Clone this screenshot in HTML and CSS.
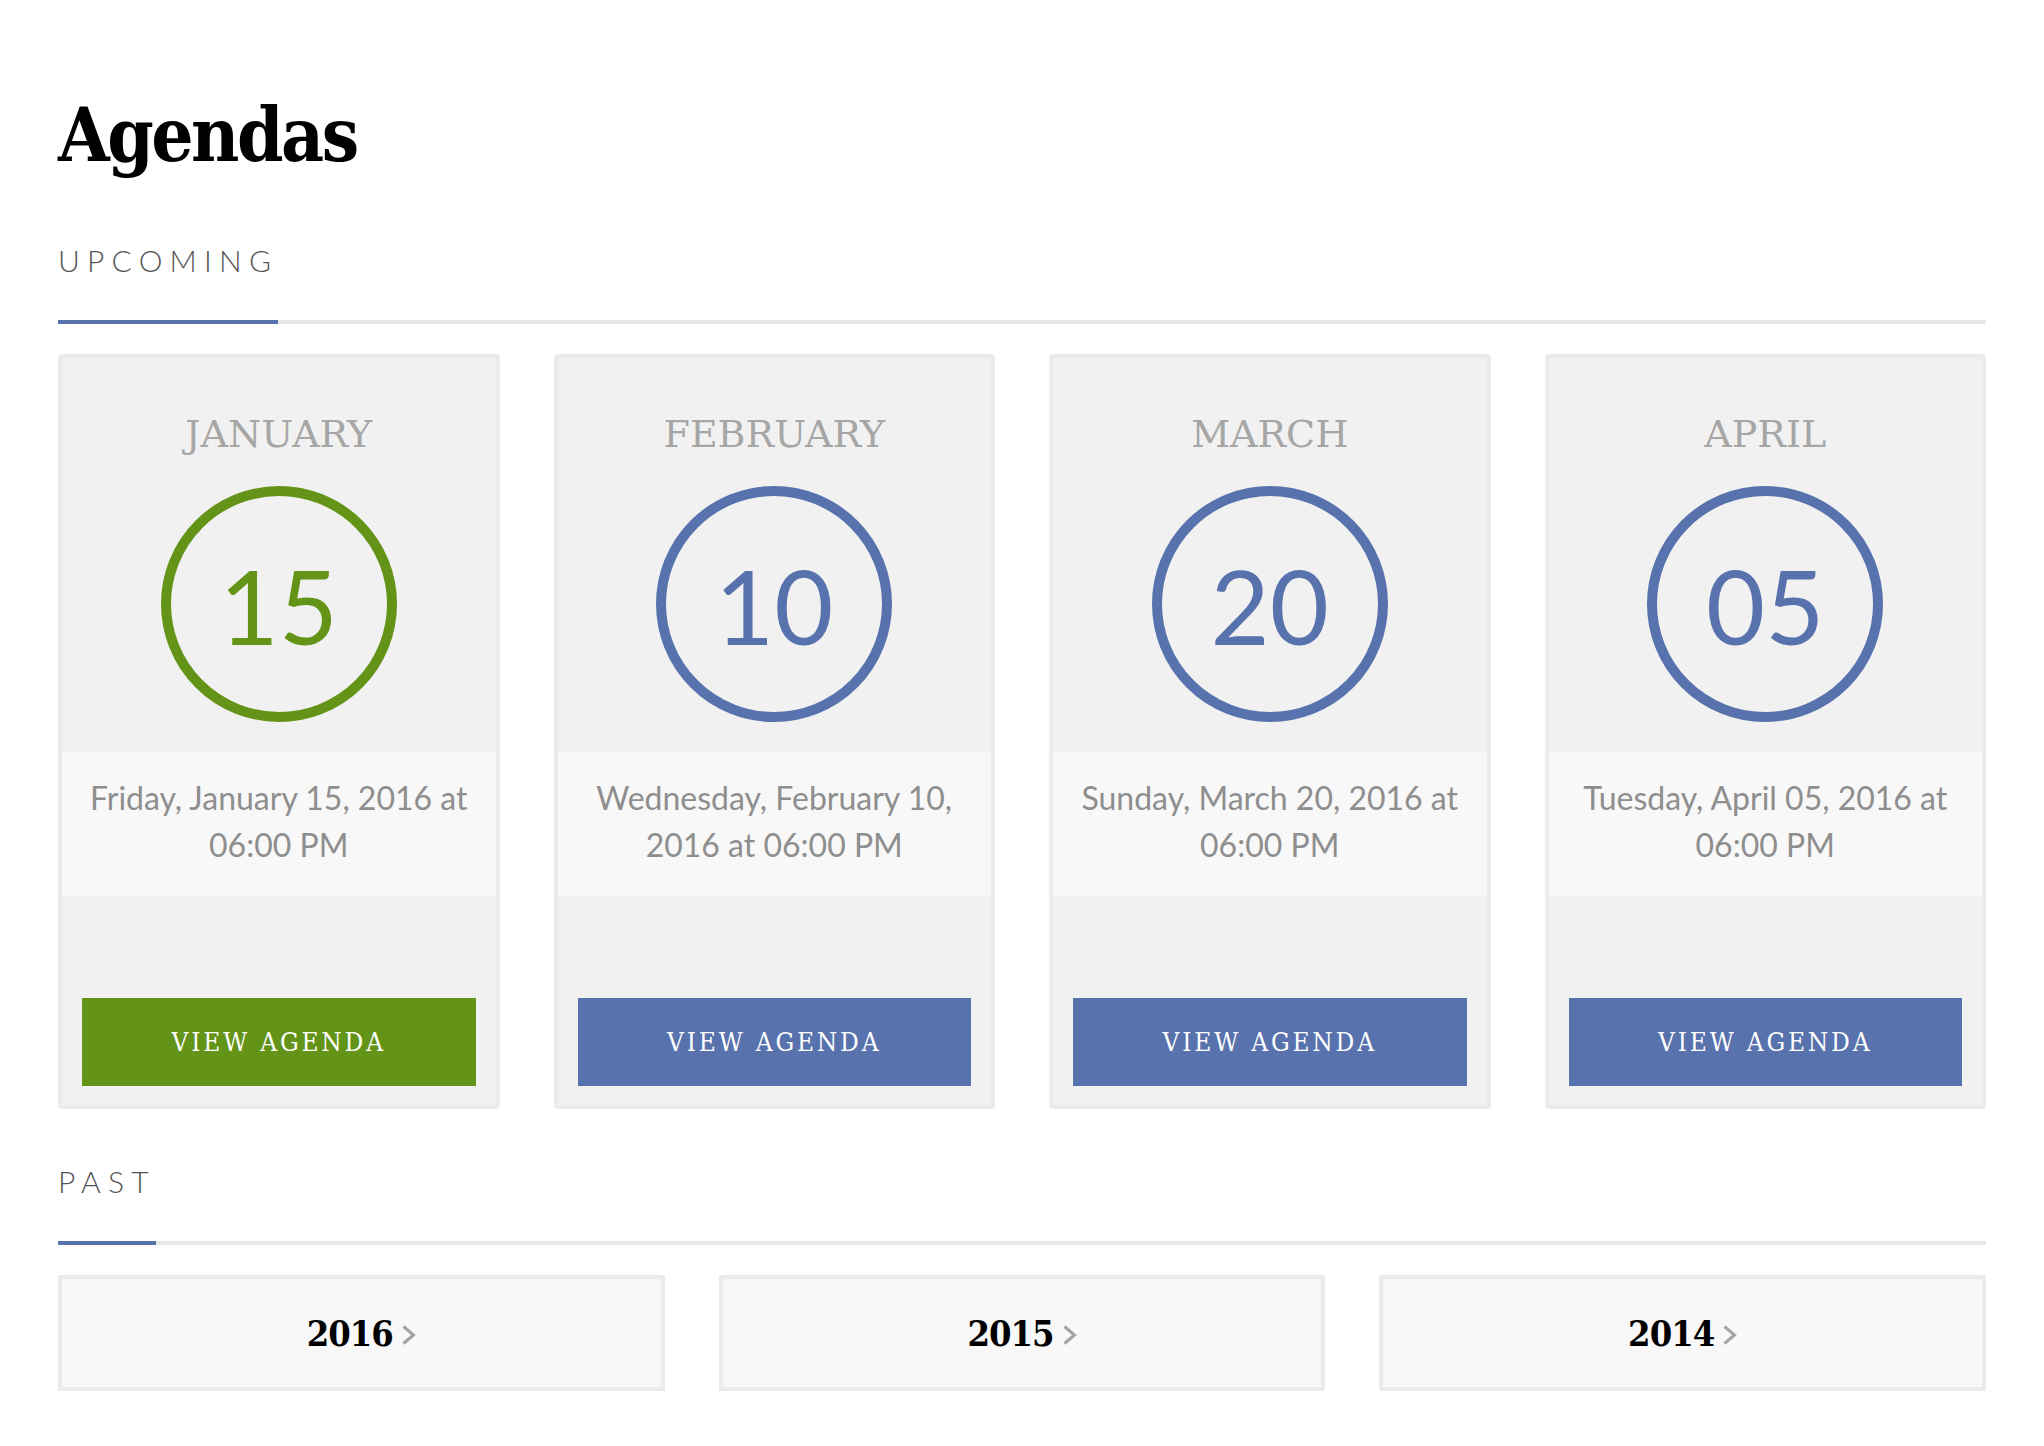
FILE: index.html
```html
<!DOCTYPE html>
<html lang="en">
<head>
<meta charset="utf-8">
<title>Agendas</title>
<link rel="stylesheet" href="styles.css">
</head>
<body>
<main class="page">
  <h1 class="title">Agendas</h1>

  <div class="section-head"><h2 class="section-title">UPCOMING</h2></div>

  <div class="cards">
    <article class="card card-green">
      <div class="month">JANUARY</div>
      <div class="day"><span>15</span></div>
      <div class="when">Friday, January 15, 2016 at 06:00 PM</div>
      <a class="btn" href="#">VIEW AGENDA</a>
    </article>
    <article class="card">
      <div class="month">FEBRUARY</div>
      <div class="day"><span>10</span></div>
      <div class="when">Wednesday, February 10, 2016 at 06:00 PM</div>
      <a class="btn" href="#">VIEW AGENDA</a>
    </article>
    <article class="card">
      <div class="month">MARCH</div>
      <div class="day"><span>20</span></div>
      <div class="when">Sunday, March 20, 2016 at 06:00 PM</div>
      <a class="btn" href="#">VIEW AGENDA</a>
    </article>
    <article class="card">
      <div class="month">APRIL</div>
      <div class="day"><span>05</span></div>
      <div class="when">Tuesday, April 05, 2016 at 06:00 PM</div>
      <a class="btn" href="#">VIEW AGENDA</a>
    </article>
  </div>

  <div class="section-head section-past"><h2 class="section-title">PAST</h2></div>

  <div class="years">
    <a class="year" href="#"><span class="year-num">2016</span><svg class="chev" width="15" height="20" viewBox="0 0 15 20"><polyline points="2.5,1.5 12.5,10 2.5,18.5" fill="none" stroke="#a3a3a3" stroke-width="3"/></svg></a>
    <a class="year" href="#"><span class="year-num">2015</span><svg class="chev" width="15" height="20" viewBox="0 0 15 20"><polyline points="2.5,1.5 12.5,10 2.5,18.5" fill="none" stroke="#a3a3a3" stroke-width="3"/></svg></a>
    <a class="year" href="#"><span class="year-num">2014</span><svg class="chev" width="15" height="20" viewBox="0 0 15 20"><polyline points="2.5,1.5 12.5,10 2.5,18.5" fill="none" stroke="#a3a3a3" stroke-width="3"/></svg></a>
  </div>
</main>
</body>
</html>
```
FILE: styles.css
```css
* { box-sizing: border-box; }

body {
  margin: 0;
  background: #ffffff;
  font-family: "Lato", "Open Sans", sans-serif;
  color: #222;
}

.page {
  padding: 0 58px 40px;
}

.title {
  margin: 98px 0 0;
  font-family: "DejaVu Serif Condensed", "DejaVu Serif", serif;
  font-stretch: condensed;
  font-weight: bold;
  font-size: 74px;
  line-height: 74px;
  letter-spacing: -2.5px;
  color: #000;
}

.section-head {
  margin-top: 73px;
  border-bottom: 4px solid #e8e8e8;
  display: flex;
}

.section-title {
  margin: 0 0 -4px;
  padding-bottom: 45px;
  font-family: "Lato", sans-serif;
  font-weight: 300;
  font-size: 30px;
  line-height: 30px;
  letter-spacing: 7.2px;
  color: #555;
  border-bottom: 4px solid #5872ad;
}

.cards {
  margin-top: 30px;
  display: grid;
  grid-template-columns: repeat(4, 1fr);
  gap: 54px;
}

.card {
  --accent: #5872ad;
  background: #f1f1f1;
  border: 4px solid #ebebeb;
  border-radius: 4px;
  padding: 57px 0 19px;
  display: flex;
  flex-direction: column;
  align-items: center;
}

.card-green { --accent: #639317; }

.month {
  font-family: "DejaVu Serif", serif;
  font-size: 38px;
  line-height: 38px;
  color: #a6a6a6;
}

.day {
  margin-top: 33px;
  width: 236px;
  height: 236px;
  border: 10px solid var(--accent);
  border-radius: 50%;
  display: flex;
  align-items: center;
  justify-content: center;
  color: var(--accent);
  font-family: "Lato", sans-serif;
  font-size: 102px;
  line-height: 1;
}

.day span { transform: translateY(2px); }

.when {
  margin-top: 30px;
  align-self: stretch;
  background: #f8f8f8;
  padding: 22px 24px 28px;
  text-align: center;
  font-family: "Lato", sans-serif;
  font-size: 32px;
  line-height: 47px;
  color: #8e8e8e;
}

.btn {
  margin-top: 102px;
  align-self: stretch;
  margin-left: 20px;
  margin-right: 20px;
  height: 88px;
  background: var(--accent);
  color: #fff;
  text-decoration: none;
  display: flex;
  align-items: center;
  justify-content: center;
  font-family: "DejaVu Serif Condensed", "DejaVu Serif", serif;
  font-stretch: condensed;
  font-size: 26px;
  letter-spacing: 2.8px;
}

.section-past { margin-top: 57px; }

.years {
  margin-top: 30px;
  display: grid;
  grid-template-columns: repeat(3, 1fr);
  gap: 54px;
}

.year {
  height: 116px;
  background: #f8f8f8;
  border: 4px solid #ebebeb;
  display: flex;
  align-items: center;
  justify-content: center;
  gap: 8px;
  text-decoration: none;
  color: #000;
}

.year-num {
  font-family: "DejaVu Serif Condensed", "DejaVu Serif", serif;
  font-stretch: condensed;
  font-weight: bold;
  font-size: 36px;
  line-height: 36px;
  letter-spacing: -1px;
}

.chev { display: block; margin-top: 3px; }
```
